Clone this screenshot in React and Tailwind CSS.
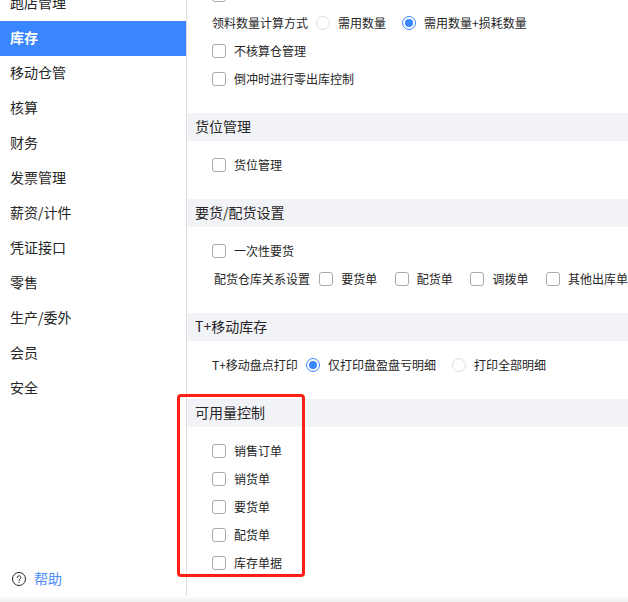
import React from "react";

const font = { fontFamily: '"Noto Sans CJK SC", "Noto Sans", sans-serif' };

const nav = ["跑店管理", "库存", "移动仓管", "核算", "财务", "发票管理", "薪资/计件", "凭证接口", "零售", "生产/委外", "会员", "安全"];

function Box() {
  return <span className="block h-[14px] w-[14px] shrink-0 rounded-[3px] border border-[#aaaaaa] bg-white" />;
}

function Radio({ on }) {
  return on ? (
    <span className="flex h-[14px] w-[14px] shrink-0 items-center justify-center rounded-full border border-[#3a86ff] bg-white">
      <span className="block h-[8px] w-[8px] rounded-full bg-[#3a86ff]" />
    </span>
  ) : (
    <span className="block h-[14px] w-[14px] shrink-0 rounded-full border border-[#dddddd] bg-white" />
  );
}

function CheckRow({ label }) {
  return (
    <div className="flex h-[28px] items-center gap-2 pl-[25px] text-[12px] text-[#262626]">
      <Box />
      <span>{label}</span>
    </div>
  );
}

function Header({ children }) {
  return <div className="flex h-[28px] items-center bg-[#f2f3f7] pb-[2px] pl-[8px] text-[14px] text-[#262626]">{children}</div>;
}

export default function App() {
  return (
    <div className="relative h-[602px] w-[628px] overflow-hidden bg-white" style={font}>
      <div className="flex h-[596px] overflow-hidden">
        <aside className="flex w-[187px] shrink-0 flex-col border-r border-[#dddddd] pb-[7px]">
          <nav className="-mt-[14px]">
            {nav.map((n) => (
              <div
                key={n}
                className={
                  n === "库存"
                    ? "flex h-[35px] items-center bg-[#3a86ff] pb-[2px] pl-[10px] text-[14px] font-bold text-white"
                    : "flex h-[35px] items-center pb-[2px] pl-[10px] text-[14px] text-[#262626]"
                }
              >
                {n}
              </div>
            ))}
          </nav>
          <div className="mt-auto flex items-center gap-2 pl-[12px] text-[14px] text-[#4a8cff]">
            <svg width="14" height="14" viewBox="0 0 14 14" fill="none" stroke="#222222" strokeWidth="1">
              <circle cx="7" cy="7" r="6.5" />
              <path d="M5.2 5.5a1.8 1.8 0 1 1 2.7 1.6c-.6.35-.9.7-.9 1.4" strokeLinecap="round" />
              <circle cx="7" cy="10.4" r="0.6" fill="#222222" stroke="none" />
            </svg>
            <span>帮助</span>
          </div>
        </aside>

        <main className="-mt-[19px] min-w-0 flex-1">
          <section className="pb-[20px]">
            <CheckRow label="" />
            <div className="flex h-[28px] items-center pl-[25px] text-[12px] text-[#262626]">
              <span className="w-[104px]">领料数量计算方式</span>
              <Radio />
              <span className="ml-2 w-[64px]">需用数量</span>
              <Radio on />
              <span className="ml-2">需用数量+损耗数量</span>
            </div>
            <CheckRow label="不核算仓管理" />
            <CheckRow label="倒冲时进行零出库控制" />
          </section>

          <Header>货位管理</Header>
          <section className="pt-[10px] pb-[20px]">
            <CheckRow label="货位管理" />
          </section>

          <Header>要货/配货设置</Header>
          <section className="pt-[10px] pb-[20px]">
            <CheckRow label="一次性要货" />
            <div className="flex h-[28px] items-center whitespace-nowrap pl-[27px] text-[12px] text-[#262626]">
              <span className="w-[106px]">配货仓库关系设置</span>
              <Box />
              <span className="ml-2 w-[54px]">要货单</span>
              <Box />
              <span className="ml-2 w-[54px]">配货单</span>
              <Box />
              <span className="ml-2 w-[54px]">调拨单</span>
              <Box />
              <span className="ml-2">其他出库单</span>
            </div>
          </section>

          <Header>T+移动库存</Header>
          <section className="pt-[10px] pb-[20px]">
            <div className="flex h-[28px] items-center whitespace-nowrap pl-[25px] text-[12px] text-[#262626]">
              <span className="w-[94px]">T+移动盘点打印</span>
              <Radio on />
              <span className="ml-2 w-[124px]">仅打印盘盈盘亏明细</span>
              <Radio />
              <span className="ml-2">打印全部明细</span>
            </div>
          </section>

          <Header>可用量控制</Header>
          <section className="pt-[10px]">
            <CheckRow label="销售订单" />
            <CheckRow label="销货单" />
            <CheckRow label="要货单" />
            <CheckRow label="配货单" />
            <CheckRow label="库存单据" />
          </section>
        </main>
      </div>
      <div className="h-[6px] bg-gradient-to-b from-white to-[#eeeeee]" />

      <div className="pointer-events-none absolute left-[177px] top-[394px] h-[183px] w-[128px] rounded-[4px] border-[3px] border-[#ff1f14]" />
    </div>
  );
}
